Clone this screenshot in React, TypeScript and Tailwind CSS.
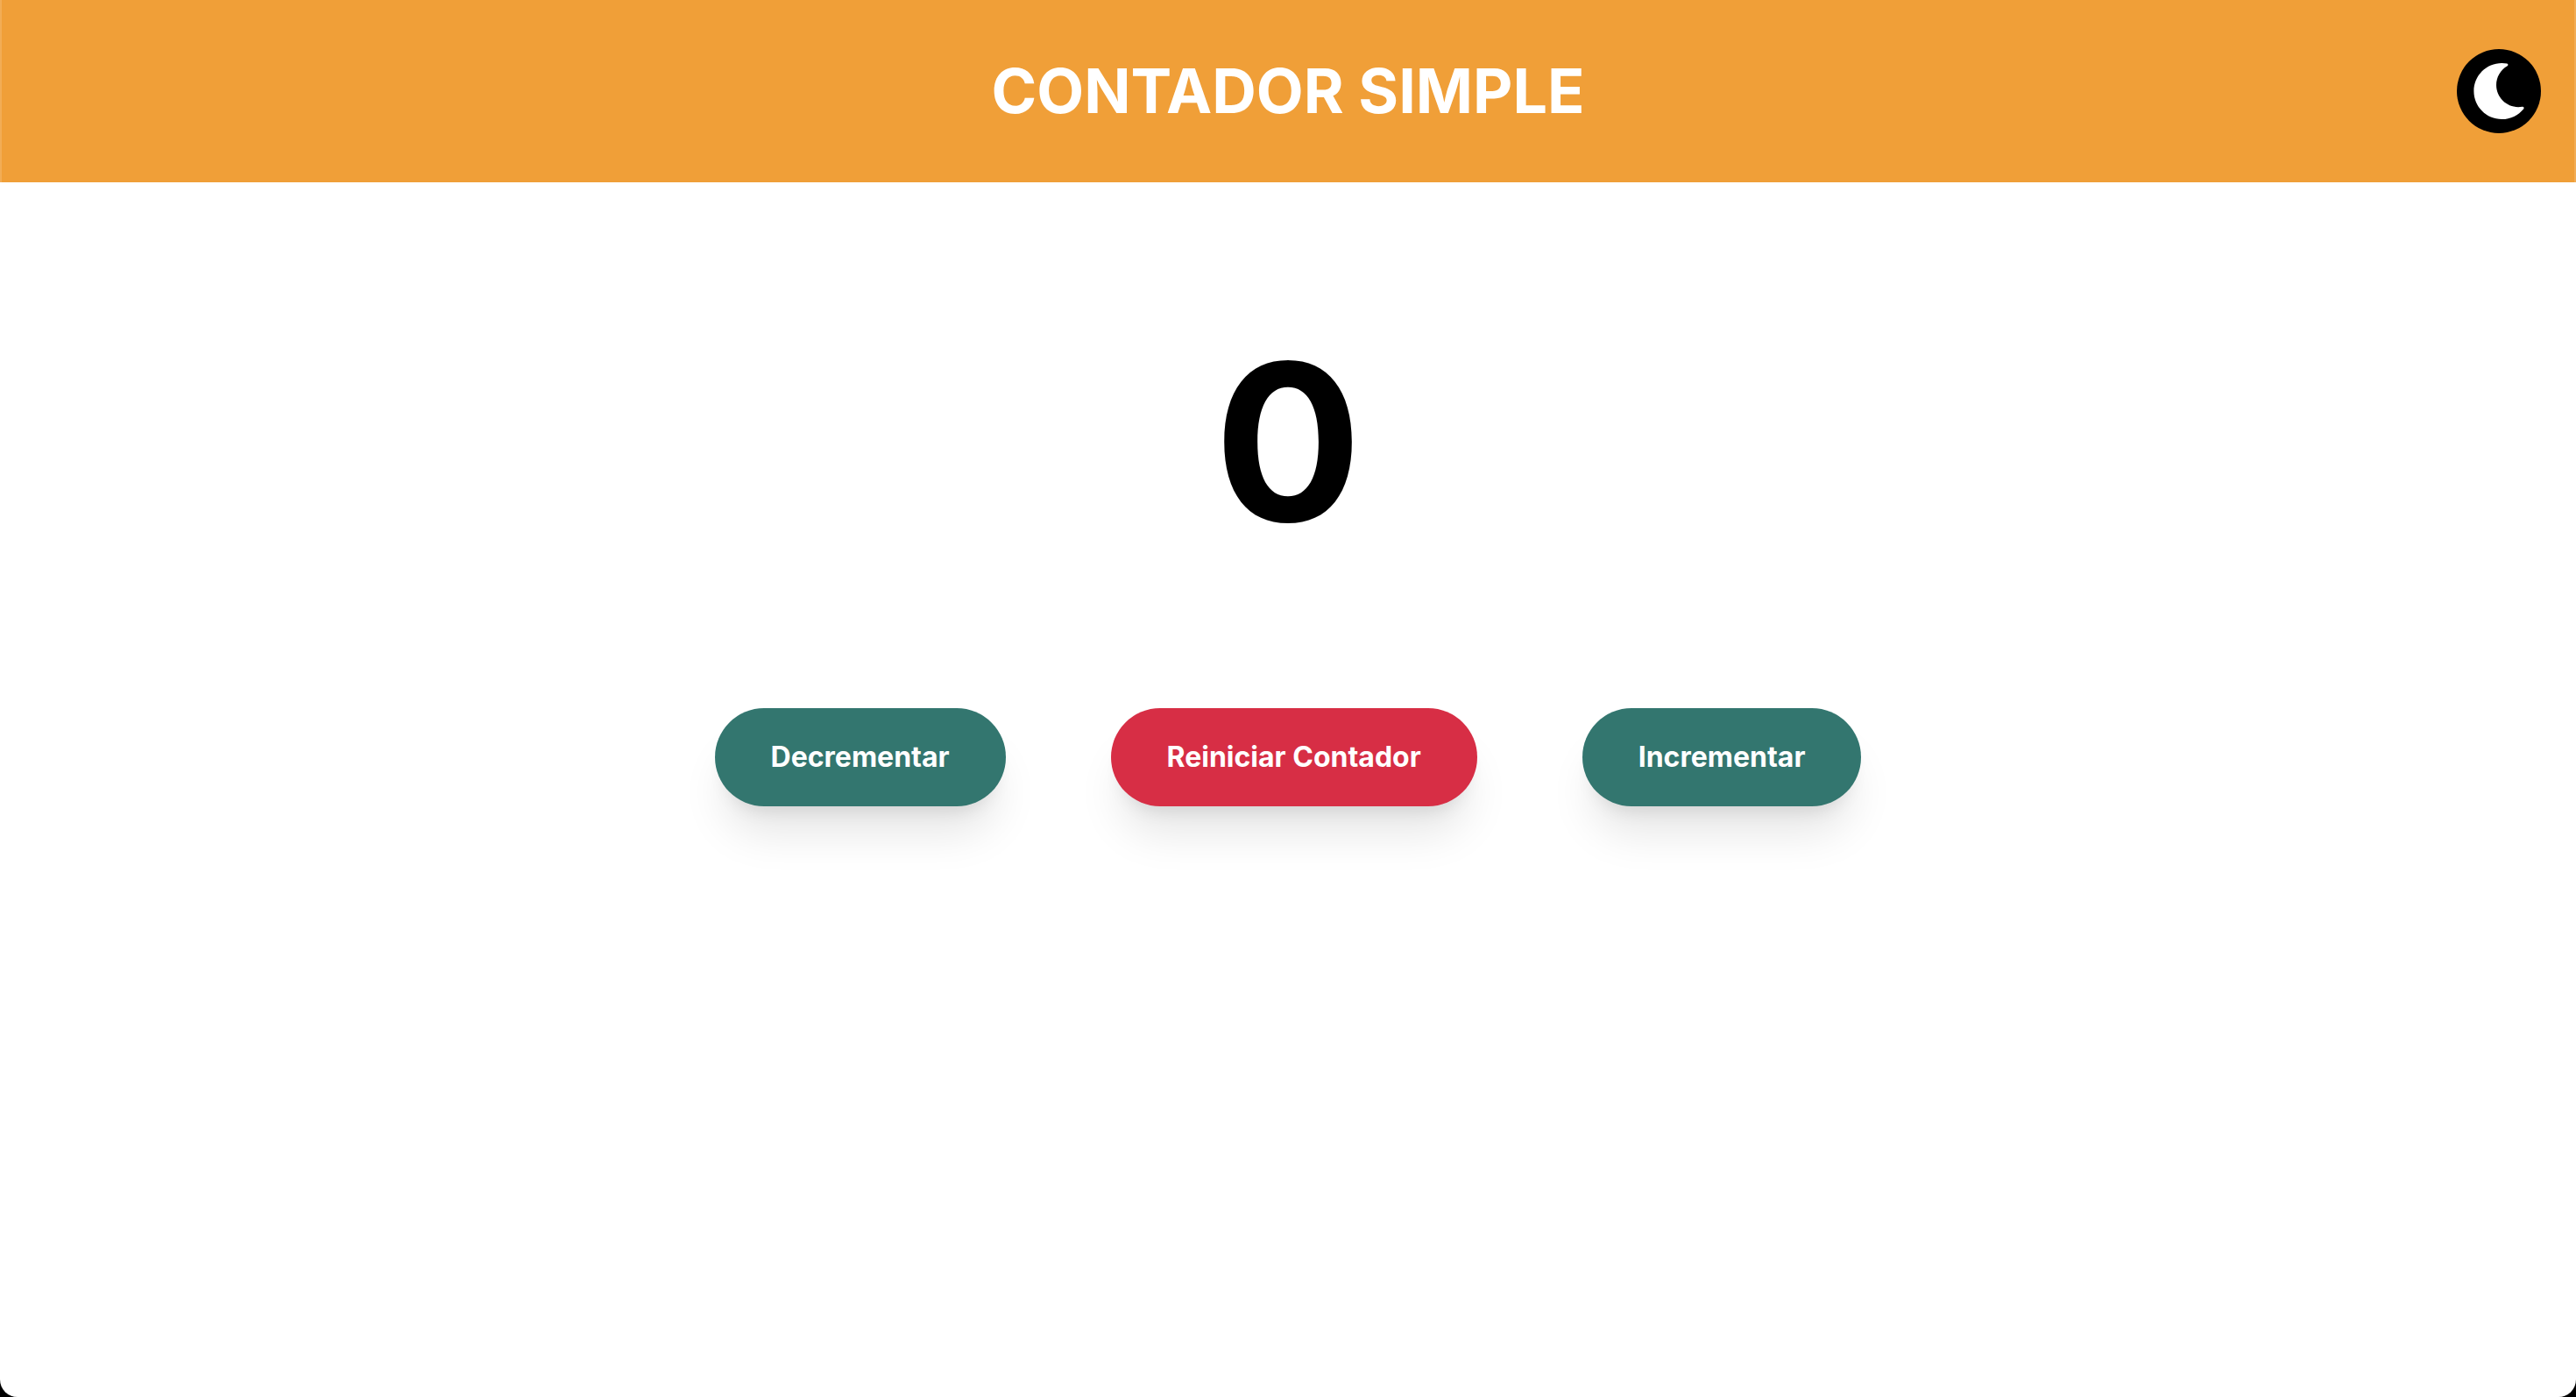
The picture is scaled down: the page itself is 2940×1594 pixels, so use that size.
import { useState } from "react";
import { FaMoon, FaSun } from "react-icons/fa";

const pill =
  "h-28 cursor-pointer rounded-full px-16 text-[32px] leading-12 font-bold text-white shadow-[0_40px_50px_-10px_rgba(0,0,0,0.1),0_16px_20px_-12px_rgba(0,0,0,0.1)]";

export default function App() {
  const [count, setCount] = useState(0);
  const [dark, setDark] = useState(false);
  return (
    <div className="min-h-screen bg-black font-['Inter',sans-serif]">
      <div className={`min-h-screen overflow-hidden rounded-b-[20px] ${dark ? "bg-gray-900 text-white" : "bg-white text-black"}`}>
        <header className="grid h-52 grid-cols-[1fr_auto_1fr] items-center border-x-2 border-white/15 bg-[#f09f38] px-[38px]">
          <h1 className="col-start-2 text-[70px] leading-18 font-bold text-white">CONTADOR SIMPLE</h1>
          <button
            type="button"
            aria-label="Cambiar tema"
            onClick={() => setDark(!dark)}
            className="flex size-24 cursor-pointer items-center justify-center justify-self-end rounded-full bg-black text-white"
          >
            {dark ? <FaSun className="size-16" /> : <FaMoon className="size-16" />}
          </button>
        </header>
        <main className="flex flex-col items-center pt-42">
          <p className="text-[250px] leading-[256px] font-bold">{count}</p>
          <div className="mt-44 flex justify-center gap-30">
            <button type="button" onClick={() => setCount(count - 1)} className={`bg-[#33766f] ${pill}`}>Decrementar</button>
            <button type="button" onClick={() => setCount(0)} className={`bg-[#d72e45] ${pill}`}>Reiniciar Contador</button>
            <button type="button" onClick={() => setCount(count + 1)} className={`bg-[#33766f] ${pill}`}>Incrementar</button>
          </div>
        </main>
      </div>
    </div>
  );
}
